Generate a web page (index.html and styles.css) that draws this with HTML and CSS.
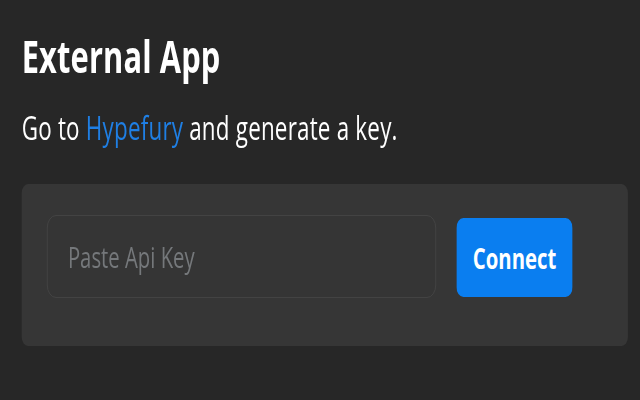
FILE: index.html
```html
<!DOCTYPE html>
<html lang="en">
<head>
<meta charset="utf-8">
<title>External App</title>
<link rel="stylesheet" href="styles.css">
</head>
<body>
<div class="frame">
  <div class="page">
    <h1 class="title">External App</h1>
    <p class="lead">Go to <a class="link" href="#">Hypefury</a> and generate a key.</p>
    <div class="card">
      <input class="key-input" type="text" placeholder="Paste Api Key">
      <button class="connect" type="button">Connect</button>
    </div>
  </div>
</div>
</body>
</html>
```

FILE: styles.css
```css
html, body {
  margin: 0;
  padding: 0;
  background: #272727;
  overflow: hidden;
}

.frame {
  width: 640px;
  height: 400px;
  overflow: hidden;
}

.page {
  width: 900px;
  box-sizing: border-box;
  padding: 34px 3px 0 31px;
  transform: scaleX(0.7);
  transform-origin: 0 0;
  font-family: "Open Sans", "Noto Sans", sans-serif;
  color: #ffffff;
}

.title {
  margin: 0;
  font-size: 44px;
  line-height: 44px;
  font-weight: 700;
  letter-spacing: 0.2px;
}

.lead {
  margin: 34px 0 0;
  font-size: 32px;
  line-height: 32px;
  font-weight: 400;
  letter-spacing: 0.3px;
}

.link {
  color: #1f7fe4;
  text-decoration: none;
}

.card {
  margin-top: 40px;
  background: #363636;
  border-radius: 9px;
  padding: 31px 0 48px 36px;
  height: 83px;
  display: flex;
  align-items: flex-start;
  gap: 29px;
}

.key-input {
  width: 556px;
  height: 83px;
  box-sizing: border-box;
  margin: 0;
  padding: 0 0 0 29px;
  background: #353535;
  border: 1.5px solid #464646;
  border-radius: 13px;
  color: #dddddd;
  font-family: "Open Sans", "Noto Sans", sans-serif;
  font-size: 29px;
  outline: none;
}

.key-input::placeholder {
  color: #75787b;
  opacity: 1;
}

.connect {
  margin-top: 3px;
  width: 166px;
  height: 79px;
  border: none;
  border-radius: 10px;
  background: #0a7ef0;
  color: #ffffff;
  font-family: "Open Sans", "Noto Sans", sans-serif;
  font-size: 29px;
  font-weight: 700;
  padding: 0;
}
```
